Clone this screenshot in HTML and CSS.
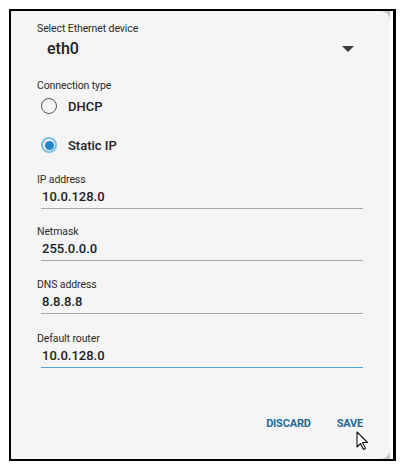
FILE: index.html
```html
<!DOCTYPE html>
<html lang="en">
<head>
  <meta charset="UTF-8">
  <meta name="viewport" content="width=device-width, initial-scale=1.0">
  <title>Ethernet Settings</title>
  <link rel="stylesheet" href="styles.css">
</head>
<body>
  <div class="frame">
    <div class="card">
      <div class="field-label">Select Ethernet device</div>
      <div class="select-row">
        <span class="select-value">eth0</span>
        <span class="caret"></span>
      </div>

      <div class="field-label conn-label">Connection type</div>
      <div class="radio-row">
        <span class="radio"></span>
        <span class="radio-text">DHCP</span>
      </div>
      <div class="radio-row static-row">
        <span class="radio checked"></span>
        <span class="radio-text">Static IP</span>
      </div>

      <div class="field first-field">
        <div class="field-label">IP address</div>
        <div class="field-value">10.0.128.0</div>
      </div>
      <div class="field">
        <div class="field-label">Netmask</div>
        <div class="field-value">255.0.0.0</div>
      </div>
      <div class="field dns-field">
        <div class="field-label">DNS address</div>
        <div class="field-value">8.8.8.8</div>
      </div>
      <div class="field router-field">
        <div class="field-label">Default router</div>
        <div class="field-value active">10.0.128.0</div>
      </div>

      <div class="actions">
        <button type="button" class="btn">DISCARD</button>
        <button type="button" class="btn">SAVE</button>
      </div>

      <svg class="cursor" width="13" height="20" viewBox="0 0 13 20">
        <path d="M1 1 L1 16 L4.5 12.5 L7.5 18.5 L9.5 17.5 L6.5 11.5 L11.5 11.5 Z" fill="#fff" stroke="#111" stroke-width="1.1" stroke-linejoin="round"/>
      </svg>
    </div>
  </div>
</body>
</html>
```

FILE: styles.css
```css
body {
  margin: 0;
  padding: 0;
  background-color: white;
  font-family: Roboto, "Liberation Sans", sans-serif;
  color: #212121;
}
.frame {
  margin: 9px 0 0 9px;
  width: 387px;
  height: 452px;
  box-sizing: border-box;
  border: 2px solid #000;
  border-right-width: 3px;
  background-color: #c4c4c4;
  padding-right: 3px;
  background-clip: content-box;
  position: relative;
}
.frame::after {
  content: "";
  position: absolute;
  top: 0;
  right: 0;
  width: 3px;
  height: 100%;
  background-color: white;
}
.card {
  position: relative;
  height: 100%;
  box-sizing: border-box;
  background-color: #f5f5f5;
  border-radius: 2px 9px 9px 2px;
  padding: 11px 27px 0 26px;
}
.field-label {
  font-size: 10.5px;
  line-height: 13px;
  color: #2b2b2b;
  letter-spacing: -0.1px;
}
.select-row {
  display: flex;
  align-items: center;
  justify-content: space-between;
  margin-top: 3px;
  padding-left: 10px;
  height: 20px;
}
.select-value {
  font-size: 16px;
  font-weight: 500;
}
.caret {
  width: 0;
  height: 0;
  border-left: 6px solid transparent;
  border-right: 6px solid transparent;
  border-top: 6px solid #3a3a3a;
  margin-right: 9px;
  margin-top: 2px;
}
.conn-label {
  margin-top: 21px;
}
.radio-row {
  display: flex;
  align-items: center;
  gap: 11px;
  height: 20px;
  margin-top: 4px;
  padding-left: 4px;
}
.static-row {
  margin-top: 19px;
}
.radio {
  width: 16px;
  height: 16px;
  box-sizing: border-box;
  border: 1.5px solid #555;
  border-radius: 50%;
  position: relative;
}
.radio.checked {
  border: 2px solid #7bbde3;
}
.radio.checked::after {
  content: "";
  position: absolute;
  left: 1.5px;
  top: 1.5px;
  width: 9px;
  height: 9px;
  border-radius: 50%;
  background-color: #1f88c6;
}
.radio-text {
  font-size: 13px;
  font-weight: 500;
}
.field {
  margin-top: 16px;
}
.first-field {
  margin-top: 18px;
}
.dns-field {
  margin-top: 17px;
}
.router-field {
  margin-top: 18px;
}
.field-value {
  margin: 2px 0 0 4px;
  padding: 0 0 2px 1px;
  font-size: 13px;
  font-weight: 500;
  line-height: 18px;
  border-bottom: 1.5px solid #a8a8a8;
}
.field-value.active {
  border-bottom-color: #4da2d6;
}
.actions {
  display: flex;
  justify-content: flex-end;
  gap: 26px;
  margin-top: 49px;
}
.btn {
  background: none;
  border: none;
  padding: 0;
  font-family: Roboto, "Liberation Sans", sans-serif;
  font-size: 11px;
  font-weight: 700;
  letter-spacing: -0.2px;
  color: #1f6b96;
  line-height: 14px;
  cursor: pointer;
}
.cursor {
  position: absolute;
  left: 345px;
  top: 420px;
}
```
